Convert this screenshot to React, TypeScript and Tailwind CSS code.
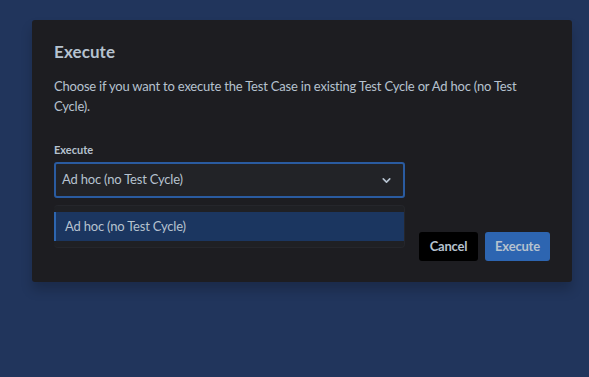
import { ChevronDown } from "lucide-react";

const font = { fontFamily: 'Lato, "Noto Sans", sans-serif' };

const App = () => {
  return (
    <div className="w-[589px] h-[377px] bg-[#21355c] pt-[20px] pl-[32px]" style={font}>
      <div className="w-[540px] h-[262px] rounded-[3px] bg-[#1d1d21] px-[22px] pt-[20px] text-[#b6c2cf] shadow-[0_8px_12px_rgba(0,0,0,0.2)]">
        <h1 className="text-[17px] font-bold leading-[24px] tracking-[0.1px]">Execute</h1>
        <p className="mt-[12px] text-[13px] leading-[20px] tracking-[-0.2px] max-w-[480px]">
          Choose if you want to execute the Test Case in existing Test Cycle or Ad hoc (no Test Cycle).
        </p>

        <div className="flex items-end justify-between mt-[26px]">
          <div className="w-[351px]">
            <label className="block text-[11px] font-bold leading-[16px] mb-[4px]">Execute</label>
            <div className="flex items-center justify-between h-[36px] border-2 border-[#2a5ba0] rounded-[3px] bg-[#222327] pl-[6px] pr-[10px]">
              <span className="text-[13px] tracking-[-0.2px]">Ad hoc (no Test Cycle)</span>
              <ChevronDown size={13} strokeWidth={3} className="text-[#b6c2cf]" />
            </div>
            <div className="mt-[7px] rounded-[4px] bg-[#1f2024] border border-l-0 border-[#25262b] py-[6px]">
              <div className="h-[29px] flex items-center border-l-2 border-[#2d66b0] bg-[#1b3660] pl-[9px] text-[13px] tracking-[-0.2px]">
                Ad hoc (no Test Cycle)
              </div>
            </div>
          </div>

          <div className="flex gap-[7px] mb-[-13px]">
            <button className="h-[29px] w-[59px] rounded-[3px] bg-black text-[13px] font-bold tracking-[-0.2px]">Cancel</button>
            <button className="h-[29px] w-[65px] rounded-[3px] bg-[#2d65b1] text-[13px] font-bold tracking-[-0.2px]">Execute</button>
          </div>
        </div>
      </div>
    </div>
  );
};

export default App;
